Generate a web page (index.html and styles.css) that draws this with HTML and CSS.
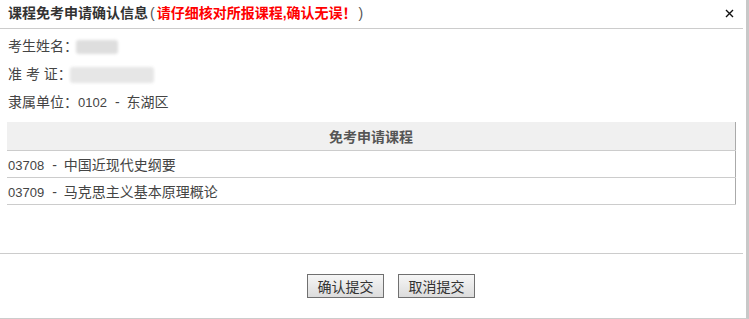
FILE: index.html
```html
<!DOCTYPE html>
<html lang="zh-CN">
<head>
	<meta charset="UTF-8">
	<title>课程免考申请确认信息</title>
	<link rel="stylesheet" href="styles.css">
</head>
<body>
	<section class="dialog">

		<div class="title">
			<span>课程免考申请确认信息</span><span class="paren">(</span><span class="warn">请仔细核对所报课程,确认无误！</span><span class="paren">)</span>
			<button class="close" title="关闭">
				<svg width="9" height="9" viewBox="0 0 9 9"><path d="M1 1L8 8M8 1L1 8" stroke="#111" stroke-width="1.4"/></svg>
			</button>
		</div>

		<div class="content">
			<p class="line">考生姓名：<span class="mask mask-name"></span></p>
			<p class="line">准&nbsp;考&nbsp;证：<span class="mask mask-id"></span></p>
			<p class="line">隶属单位：<span class="code">0102</span><span class="dash">-</span>东湖区</p>

			<table class="courses">
				<thead>
					<tr><th>免考申请课程</th></tr>
				</thead>
				<tbody>
					<tr><td><span class="code">03708</span><span class="dash">-</span>中国近现代史纲要</td></tr>
					<tr><td><span class="code">03709</span><span class="dash">-</span>马克思主义基本原理概论</td></tr>
				</tbody>
			</table>
		</div>

		<div class="footer">
			<button class="btn" id="submit">确认提交</button>
			<button class="btn" id="cancel">取消提交</button>
		</div>

	</section>
</body>
</html>
```

FILE: styles.css
```css
* {
	box-sizing: border-box;
}

body {
	margin: 0;
	font-family: "Liberation Sans", "Noto Sans CJK SC", sans-serif;
	font-size: 14px;
	color: #444;
	background: #fff;
}

.dialog {
	width: 749px;
	height: 319px;
	border-right: 3px solid #c8c8c8;
	border-bottom: 1px solid #ccc;
}

.title {
	position: relative;
	height: 29px;
	line-height: 27px;
	padding-left: 8px;
	margin-right: 3px;
	border-bottom: 1px solid #ccc;
	font-weight: bold;
	color: #333;
}

.paren {
	font-weight: normal;
	color: #555;
	padding: 0 2px;
}

.warn {
	color: #f00;
}

.close {
	position: absolute;
	right: 8px;
	top: 8px;
	width: 11px;
	height: 11px;
	padding: 1px;
	border: 0;
	background: none;
	line-height: 0;
}

.content {
	height: 224px;
	padding: 3px 10px 0 7px;
}

.line {
	margin: 0;
	padding-left: 1px;
	line-height: 28px;
	height: 28px;
}

.code {
	font-size: 13px;
}

.dash {
	padding: 0 7px 0 8px;
}

.mask {
	display: inline-block;
	vertical-align: middle;
	height: 14px;
	background: #dedede;
	filter: blur(1.5px);
	border-radius: 3px;
}

.mask-name {
	width: 42px;
	margin-left: -2px;
}

.mask-id {
	width: 84px;
	height: 16px;
	margin-left: -2px;
	background: #e6e6e6;
}

.courses {
	width: 729px;
	margin-top: 6px;
	border-collapse: collapse;
	border-right: 1px solid #aaa;
	border-bottom: 1px solid #aaa;
}

.courses th {
	height: 28px;
	background: #f0f0f0;
	border-bottom: 1px solid #ccc;
	color: #555;
	font-size: 14px;
}

.courses td {
	height: 27px;
	padding: 0 1px;
	border-bottom: 1px solid #ccc;
	color: #444;
}

.footer {
	height: 65px;
	margin-right: 3px;
	border-top: 1px solid #ccc;
	padding: 20px 0 0 307px;
	display: flex;
	gap: 14px;
}

.btn {
	width: 77px;
	height: 24px;
	padding: 0;
	border: 1px solid #707070;
	background: linear-gradient(#f6f6f6, #dcdcdc);
	font-family: inherit;
	font-size: 14px;
	color: #333;
}

.btn:hover {
	opacity: .8;
}
```
